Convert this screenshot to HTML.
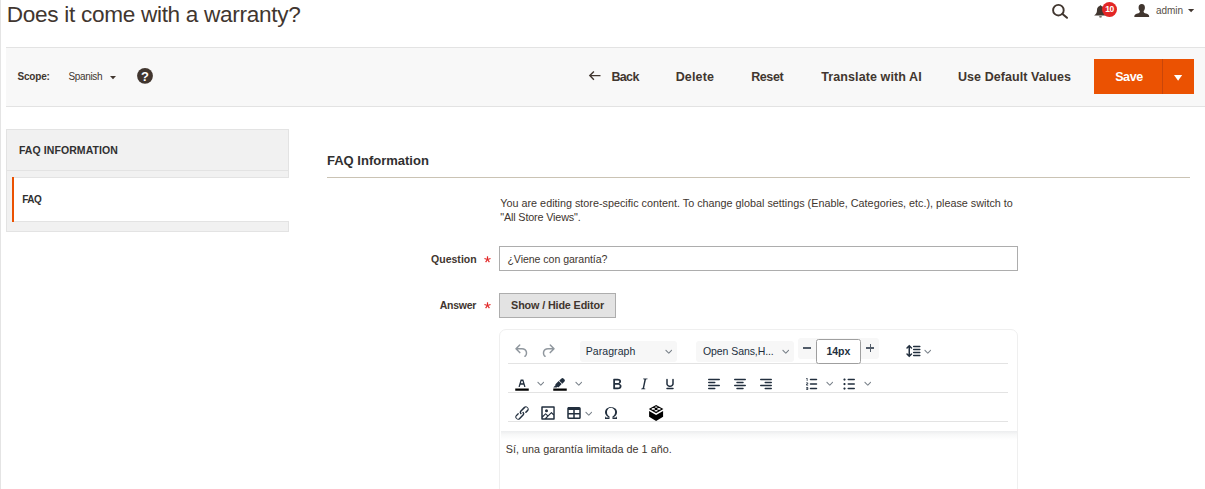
<!DOCTYPE html>
<html>
<head>
<meta charset="utf-8">
<title>Does it come with a warranty?</title>
<style>
*{box-sizing:border-box;margin:0;padding:0}
html,body{width:1205px;height:489px;overflow:hidden;background:#fff}
body{font-family:"Liberation Sans",sans-serif;color:#41362f;position:relative;font-size:11px}
.abs{position:absolute}
.t{position:absolute;white-space:nowrap}
svg{position:absolute;overflow:visible}
.ic{width:18px;height:18px;fill:#222f3e}
.ch{width:7.5px;height:7.5px;fill:rgba(34,47,62,.62);transform:scale(.88)}
.dis{fill:rgba(34,47,62,.5)}
.leftline{left:0;top:0;width:1px;height:489px;background:#e4e4e4}
.actions{left:6px;top:47px;width:1199px;height:60px;background:#f8f8f8;border-top:1px solid #e3e3e3;border-bottom:1px solid #e3e3e3}
.save{left:1094px;top:59px;width:100px;height:35px;background:#eb5202}
.savediv{left:1162px;top:59px;width:1px;height:35px;background:#c9460a}
.panel{left:6px;top:129px;width:283px;height:103px;background:#f1f1f1;border:1px solid #e3e3e3}
.panelhead{left:7px;top:170px;width:281px;height:1px;background:#e3e3e3}
.item{left:12px;top:177px;width:277px;height:45px;background:#fff;border-top:1px solid #e3e3e3;border-bottom:1px solid #e3e3e3}
.secline{left:327px;top:177px;width:863px;height:1px;background:#cac3b4}
.star{color:#e22626;font-weight:700}
.input{left:499px;top:246px;width:519px;height:25px;border:1px solid #adadad;background:#fff}
.showbtn{left:499px;top:293px;width:117px;height:25px;border:1px solid #adadad;background:#e3e3e3}
.editor{left:499px;top:329px;width:519px;height:200px;border:1px solid #efefef;border-radius:7px;background:#fff}
.tbshadow{left:501px;top:431px;width:516px;height:9px;background:linear-gradient(rgba(34,47,62,.085),rgba(34,47,62,.035) 40%,rgba(34,47,62,0) 100%)}
.tbline{left:508px;width:500px;height:1px;background:#e3e3e3}
.sel{background:#f7f7f7;border-radius:3px}
</style>
</head>
<body>
<div class="abs leftline"></div>

<!-- header right icons -->
<svg style="left:1051px;top:3px" width="18" height="16" viewBox="0 0 18 16"><circle cx="7.4" cy="7.2" r="5.3" fill="none" stroke="#41362f" stroke-width="1.9"/><path d="M11.5 10.9 L16 14.8" stroke="#41362f" stroke-width="2" stroke-linecap="round"/></svg>
<svg style="left:1094px;top:5.4px" width="13" height="12.6" viewBox="0 0 13 12.6"><path d="M6.5 0.2 C6 0.2 5.7 0.5 5.7 1 C4 1.5 3 3 3 5 C3 8 2 9 0.1 10.4 L12.9 10.4 C11 9 10 8 10 5 C10 3 9 1.5 7.3 1 C7.3 0.5 7 0.2 6.5 0.2 Z" fill="#41362f"/><ellipse cx="6.5" cy="11.8" rx="1.6" ry="0.65" fill="#41362f"/></svg>
<div class="abs" style="left:1102.3px;top:1.6px;width:15.1px;height:15.1px;border-radius:8px;background:#e22626"></div>
<div class="t" style="left:1105.2px;top:5.3px;font-size:8.5px;line-height:8.5px;font-weight:700;color:#fff;letter-spacing:-0.3px">10</div>
<svg style="left:1134px;top:4px" width="15.5" height="13" viewBox="0 0 15.5 13"><path d="M7.75 0 C5.6 0 4.6 1.6 4.6 3.4 C4.6 5 5.1 6.2 5.9 7 C5.9 8.6 5.2 9 3.4 9.6 C1.2 10.3 0.3 10.8 0.3 13 L15.2 13 C15.2 10.8 14.3 10.3 12.1 9.6 C10.3 9 9.6 8.6 9.6 7 C10.4 6.2 10.9 5 10.9 3.4 C10.9 1.6 9.9 0 7.75 0 Z" fill="#41362f"/></svg>
<svg style="left:1188px;top:9.2px" width="6.2" height="3.2" viewBox="0 0 6.2 3.2"><path d="M0 0 L6.2 0 L3.1 3.2 Z" fill="#41362f"/></svg>

<!-- action bar -->
<div class="abs actions"></div>
<svg style="left:110.4px;top:75.7px" width="6" height="3.2" viewBox="0 0 6 3.2"><path d="M0 0 L6 0 L3 3.2 Z" fill="#41362f"/></svg>
<svg style="left:137px;top:68px" width="16" height="16" viewBox="0 0 16 16"><circle cx="8" cy="7.8" r="7.9" fill="#41362f"/><text x="8" y="12.6" font-family="Liberation Sans" font-weight="700" font-size="13" fill="#fff" text-anchor="middle">?</text></svg>
<svg style="left:589.2px;top:71px" width="11.5" height="9.2" viewBox="0 0 11.5 9.2"><path d="M4.9 0.4 L0.8 4.6 L4.9 8.8 M0.8 4.6 L11.5 4.6" fill="none" stroke="#41362f" stroke-width="1.4"/></svg>
<div class="abs save"></div>
<div class="abs savediv"></div>
<svg style="left:1174.2px;top:75.2px" width="8.2" height="5.8" viewBox="0 0 8.2 5.8"><path d="M0 0 L8.2 0 L4.1 5.8 Z" fill="#fff"/></svg>

<!-- left panel -->
<div class="abs panel"></div>
<div class="abs panelhead"></div>
<div class="abs item"></div>
<div class="abs" style="left:12px;top:177px;width:2px;height:45px;background:#eb5202"></div>

<!-- section -->
<div class="abs secline"></div>
<svg style="left:484.25px;top:255.6px" width="7" height="7" viewBox="-3.5 -3.5 7 7"><g stroke="#e22626" stroke-width="1.2" fill="none"><path d="M0 0 L0 -3.2"/><path d="M0 0 L3.04 -0.99"/><path d="M0 0 L1.88 2.59"/><path d="M0 0 L-1.88 2.59"/><path d="M0 0 L-3.04 -0.99"/></g></svg>
<svg style="left:484.25px;top:301.8px" width="7" height="7" viewBox="-3.5 -3.5 7 7"><g stroke="#e22626" stroke-width="1.2" fill="none"><path d="M0 0 L0 -3.2"/><path d="M0 0 L3.04 -0.99"/><path d="M0 0 L1.88 2.59"/><path d="M0 0 L-1.88 2.59"/><path d="M0 0 L-3.04 -0.99"/></g></svg>
<div class="abs input"></div>
<div class="abs showbtn"></div>

<!-- editor -->
<div class="abs editor"></div>
<div class="abs tbshadow"></div>
<div class="abs tbline" style="top:363px"></div>
<div class="abs tbline" style="top:392px"></div>
<div class="abs tbline" style="top:421px"></div>

<!-- row 1 -->
<svg class="ic dis" style="left:513px;top:341.7px" viewBox="0 0 24 24"><path d="M6.4 8H12c3.7 0 6.2 2 6.8 5.1.6 2.7-.4 5.6-2.3 6.8a1 1 0 0 1-1-1.8c1.1-.6 1.8-2.7 1.4-4.6-.5-2.1-2.1-3.5-4.9-3.5H6.4l3.3 3.3a1 1 0 1 1-1.4 1.4l-5-5a1 1 0 0 1 0-1.4l5-5a1 1 0 0 1 1.4 1.4L6.4 8Z"/></svg>
<svg class="ic dis" style="left:539px;top:341.7px" viewBox="0 0 24 24"><path d="M17.6 8H12c-3.7 0-6.2 2-6.8 5.1-.6 2.7.4 5.6 2.3 6.8a1 1 0 0 0 1-1.8c-1.1-.6-1.8-2.7-1.4-4.6.5-2.1 2.1-3.5 4.9-3.5h5.6l-3.3 3.3a1 1 0 1 0 1.4 1.4l5-5a1 1 0 0 0 0-1.4l-5-5a1 1 0 0 0-1.4 1.4L17.6 8Z"/></svg>
<div class="abs sel" style="left:580px;top:341px;width:97px;height:20.5px"></div>
<svg class="ch" style="left:665.4px;top:347.8px" viewBox="0 0 10 10"><path d="M8.7 2.2c.3-.3.8-.3 1 0 .4.4.4.9 0 1.2L5.7 7.8c-.3.3-.9.3-1.2 0L.2 3.4a.8.8 0 0 1 0-1.2c.3-.3.8-.3 1.1 0L5 6l3.7-3.8Z"/></svg>
<div class="abs sel" style="left:696px;top:341px;width:98px;height:20.5px"></div>
<svg class="ch" style="left:781.7px;top:347.8px" viewBox="0 0 10 10"><path d="M8.7 2.2c.3-.3.8-.3 1 0 .4.4.4.9 0 1.2L5.7 7.8c-.3.3-.9.3-1.2 0L.2 3.4a.8.8 0 0 1 0-1.2c.3-.3.8-.3 1.1 0L5 6l3.7-3.8Z"/></svg>
<div class="abs sel" style="left:798px;top:338px;width:81px;height:21px"></div>
<div class="abs" style="left:803.4px;top:347.2px;width:8.1px;height:1.5px;background:#525c69"></div>
<div class="abs" style="left:866.3px;top:347.35px;width:8px;height:1.5px;background:#525c69"></div>
<div class="abs" style="left:869.55px;top:344.1px;width:1.5px;height:8px;background:#525c69"></div>
<div class="abs" style="left:816px;top:339px;width:45px;height:25px;border:1px solid #9f9f9f;border-radius:2.5px;background:#fff"></div>
<svg class="ic" style="left:904.2px;top:342px" viewBox="0 0 24 24"><path d="M21 5a1 1 0 0 1 .1 2H13a1 1 0 0 1-.1-2H21zm0 4a1 1 0 0 1 .1 2H13a1 1 0 0 1-.1-2H21zm0 4a1 1 0 0 1 .1 2H13a1 1 0 0 1-.1-2H21zm0 4a1 1 0 0 1 .1 2H13a1 1 0 0 1-.1-2H21zM7 3.6l3.7 3.7a1 1 0 0 1-1.3 1.5h-.1L8 7.3v9.2l1.3-1.3a1 1 0 0 1 1.3 0h.1c.4.4.4 1 0 1.3v.1L7 20.4l-3.7-3.7a1 1 0 0 1 1.3-1.5h.1L6 16.7V7.4L4.7 8.7a1 1 0 0 1-1.3 0h-.1a1 1 0 0 1 0-1.3v-.1L7 3.6z"/></svg>
<svg class="ch" style="left:924.3px;top:348.2px" viewBox="0 0 10 10"><path d="M8.7 2.2c.3-.3.8-.3 1 0 .4.4.4.9 0 1.2L5.7 7.8c-.3.3-.9.3-1.2 0L.2 3.4a.8.8 0 0 1 0-1.2c.3-.3.8-.3 1.1 0L5 6l3.7-3.8Z"/></svg>

<!-- row 2 -->
<svg class="ic" style="left:513.1px;top:375px" viewBox="0 0 24 24"><path d="M3 18h18v3H3z" fill="#000"/><path d="M8.7 16h-.8a.5.5 0 0 1-.5-.6l2.7-9c.1-.3.3-.4.5-.4h2.8c.2 0 .4.1.5.4l2.7 9a.5.5 0 0 1-.5.6h-.8a.5.5 0 0 1-.4-.4l-.7-2.2c0-.3-.3-.4-.5-.4h-3.4c-.2 0-.4.1-.5.4l-.7 2.2c0 .3-.2.4-.4.4Zm2.6-7.6-.6 2a.5.5 0 0 0 .5.6h1.6a.5.5 0 0 0 .5-.6l-.6-2c0-.3-.3-.4-.5-.4h-.4c-.2 0-.4.1-.5.4Z" fill-rule="evenodd"/></svg>
<svg class="ch" style="left:536.9px;top:379.7px" viewBox="0 0 10 10"><path d="M8.7 2.2c.3-.3.8-.3 1 0 .4.4.4.9 0 1.2L5.7 7.8c-.3.3-.9.3-1.2 0L.2 3.4a.8.8 0 0 1 0-1.2c.3-.3.8-.3 1.1 0L5 6l3.7-3.8Z"/></svg>
<svg class="ic" style="left:551.3px;top:375px" viewBox="0 0 24 24"><path d="M3 18h18v3H3z" fill="#000"/><path d="M7.7 16.7H3l3.3-3.3-.7-.8L10.2 8l4 4.1-4 4.2c-.2.2-.6.2-.8 0l-.6-.7-1.1 1.1zm5-7.5L11 7.4l3-2.9a2 2 0 0 1 2.6 0L18 6c.7.7.7 2 0 2.7l-2.9 2.9-1.8-1.8-.5-.6"/></svg>
<svg class="ch" style="left:575.3px;top:379.7px" viewBox="0 0 10 10"><path d="M8.7 2.2c.3-.3.8-.3 1 0 .4.4.4.9 0 1.2L5.7 7.8c-.3.3-.9.3-1.2 0L.2 3.4a.8.8 0 0 1 0-1.2c.3-.3.8-.3 1.1 0L5 6l3.7-3.8Z"/></svg>
<svg class="ic" style="left:608px;top:375px" viewBox="0 0 24 24"><path d="M7.8 19c-.3 0-.5 0-.6-.2l-.2-.5V5.7c0-.2 0-.4.2-.5l.6-.2h5c1.5 0 2.7.3 3.5 1 .7.6 1.1 1.4 1.1 2.5a3 3 0 0 1-.6 1.9c-.4.6-1 1-1.6 1.2.4.1.9.3 1.3.6s.8.7 1 1.2c.4.4.5 1 .5 1.6 0 1.3-.4 2.3-1.3 3-.8.7-2.1 1-3.8 1H7.8Zm5-8.3c.6 0 1.2-.1 1.6-.5.4-.3.6-.7.6-1.3 0-1.1-.8-1.7-2.3-1.7H9.3v3.5h3.4Zm.5 6c.7 0 1.3-.1 1.7-.4.4-.4.6-.9.6-1.5s-.2-1-.7-1.4c-.4-.3-1-.4-2-.4H9.4v3.8h4Z" fill-rule="evenodd"/></svg>
<svg class="ic" style="left:634.5px;top:375px" viewBox="0 0 24 24"><path d="m16.7 4.7-.1.9h-.3c-.6 0-1 0-1.4.3-.3.3-.4.6-.5 1.1l-2.1 9.8v.6c0 .5.4.8 1.4.8h.2l-.2.8H8l.2-.8h.2c1.1 0 1.8-.5 2-1.5l2-9.8.1-.5c0-.6-.4-.8-1.4-.8h-.3l.2-.9h5.8Z" fill-rule="evenodd"/></svg>
<svg class="ic" style="left:660.5px;top:375px" viewBox="0 0 24 24"><path d="M16 5c.6 0 1 .4 1 1v5.5a4 4 0 0 1-.4 1.8l-1 1.4a5.3 5.3 0 0 1-5.5 1 5 5 0 0 1-1.6-1c-.5-.4-.8-.9-1.1-1.4a4 4 0 0 1-.4-1.8V6c0-.6.4-1 1-1s1 .4 1 1v5.5c0 .3 0 .6.2 1l.6.7a3.3 3.3 0 0 0 2.2.8 3.4 3.4 0 0 0 2.2-.8c.3-.2.4-.5.6-.8l.2-.9V6c0-.6.4-1 1-1ZM8 17h8c.6 0 1 .4 1 1s-.4 1-1 1H8a1 1 0 0 1 0-2Z" fill-rule="evenodd"/></svg>
<svg class="ic" style="left:705px;top:375px" viewBox="0 0 24 24"><path d="M5 5h14c.6 0 1 .4 1 1s-.4 1-1 1H5a1 1 0 1 1 0-2Zm0 4h8c.6 0 1 .4 1 1s-.4 1-1 1H5a1 1 0 1 1 0-2Zm0 8h8c.6 0 1 .4 1 1s-.4 1-1 1H5a1 1 0 0 1 0-2Zm0-4h14c.6 0 1 .4 1 1s-.4 1-1 1H5a1 1 0 0 1 0-2Z" fill-rule="evenodd"/></svg>
<svg class="ic" style="left:731.2px;top:375px" viewBox="0 0 24 24"><path d="M5 5h14c.6 0 1 .4 1 1s-.4 1-1 1H5a1 1 0 1 1 0-2Zm3 4h8c.6 0 1 .4 1 1s-.4 1-1 1H8a1 1 0 1 1 0-2Zm0 8h8c.6 0 1 .4 1 1s-.4 1-1 1H8a1 1 0 0 1 0-2Zm-3-4h14c.6 0 1 .4 1 1s-.4 1-1 1H5a1 1 0 0 1 0-2Z" fill-rule="evenodd"/></svg>
<svg class="ic" style="left:757px;top:375px" viewBox="0 0 24 24"><path d="M5 5h14c.6 0 1 .4 1 1s-.4 1-1 1H5a1 1 0 1 1 0-2Zm6 4h8c.6 0 1 .4 1 1s-.4 1-1 1h-8a1 1 0 0 1 0-2Zm0 8h8c.6 0 1 .4 1 1s-.4 1-1 1h-8a1 1 0 0 1 0-2Zm-6-4h14c.6 0 1 .4 1 1s-.4 1-1 1H5a1 1 0 0 1 0-2Z" fill-rule="evenodd"/></svg>
<svg class="ic" style="left:802.6px;top:375px" viewBox="0 0 24 24"><path d="M10 17h8c.6 0 1 .4 1 1s-.4 1-1 1h-8a1 1 0 0 1 0-2Zm0-6h8c.6 0 1 .4 1 1s-.4 1-1 1h-8a1 1 0 0 1 0-2Zm0-6h8c.6 0 1 .4 1 1s-.4 1-1 1h-8a1 1 0 1 1 0-2ZM6 4v3.5c0 .3-.2.5-.5.5a.5.5 0 0 1-.5-.5V5h-.5a.5.5 0 0 1 0-1H6Zm-1 8.8.2.2h1.3c.3 0 .5.2.5.5s-.2.5-.5.5H4.9a1 1 0 0 1-.9-1V13c0-.4.3-.8.6-1l1.2-.4.2-.3a.2.2 0 0 0-.2-.2H4.5a.5.5 0 0 1-.5-.5c0-.3.2-.5.5-.5h1.6c.5 0 .9.4.9 1v.1c0 .4-.3.8-.6 1l-1.2.4-.2.3ZM7 17v2c0 .6-.4 1-1 1H4.5a.5.5 0 0 1 0-1h1.2c.2 0 .3-.1.3-.3 0-.2-.1-.3-.3-.3H4.4a.4.4 0 1 1 0-.8h1.3c.2 0 .3-.1.3-.3 0-.2-.1-.3-.3-.3H4.5a.5.5 0 1 1 0-1H6c.6 0 1 .4 1 1Z" fill-rule="evenodd"/></svg>
<svg class="ch" style="left:825.85px;top:379.7px" viewBox="0 0 10 10"><path d="M8.7 2.2c.3-.3.8-.3 1 0 .4.4.4.9 0 1.2L5.7 7.8c-.3.3-.9.3-1.2 0L.2 3.4a.8.8 0 0 1 0-1.2c.3-.3.8-.3 1.1 0L5 6l3.7-3.8Z"/></svg>
<svg class="ic" style="left:839.85px;top:375px" viewBox="0 0 24 24"><path d="M11 5h8c.6 0 1 .4 1 1s-.4 1-1 1h-8a1 1 0 0 1 0-2Zm0 6h8c.6 0 1 .4 1 1s-.4 1-1 1h-8a1 1 0 0 1 0-2Zm0 6h8c.6 0 1 .4 1 1s-.4 1-1 1h-8a1 1 0 0 1 0-2ZM4.5 6c0-.8.7-1.5 1.5-1.5s1.5.7 1.5 1.5S6.8 7.5 6 7.5 4.5 6.8 4.5 6Zm0 6c0-.8.7-1.5 1.5-1.5s1.5.7 1.5 1.5-.7 1.5-1.5 1.5-1.5-.7-1.5-1.5Zm0 6c0-.8.7-1.5 1.5-1.5s1.5.7 1.5 1.5-.7 1.5-1.5 1.5-1.5-.7-1.5-1.5Z" fill-rule="evenodd"/></svg>
<svg class="ch" style="left:863.8px;top:379.7px" viewBox="0 0 10 10"><path d="M8.7 2.2c.3-.3.8-.3 1 0 .4.4.4.9 0 1.2L5.7 7.8c-.3.3-.9.3-1.2 0L.2 3.4a.8.8 0 0 1 0-1.2c.3-.3.8-.3 1.1 0L5 6l3.7-3.8Z"/></svg>

<!-- row 3 -->
<svg class="ic" style="left:513px;top:404px" viewBox="0 0 24 24"><path d="M6.2 12.3a1 1 0 0 1 1.4 1.4l-2 2a2 2 0 1 0 2.6 2.8l4.8-4.8a1 1 0 0 0 0-1.4 1 1 0 1 1 1.4-1.3 2.9 2.9 0 0 1 0 4L9.6 20a3.9 3.9 0 0 1-5.5-5.5l2-2Zm11.6-.6a1 1 0 0 1-1.4-1.4l2-2a2 2 0 1 0-2.6-2.8L11 10.3a1 1 0 0 0 0 1.4A1 1 0 1 1 9.6 13a2.9 2.9 0 0 1 0-4L14.4 4a3.9 3.9 0 0 1 5.5 5.5l-2 2Z"/></svg>
<svg class="ic" style="left:539.1px;top:404px" viewBox="0 0 24 24"><path d="m5 15.7 3.3-3.2c.3-.3.7-.3 1 0L12 15l4.1-4c.3-.4.8-.4 1 0l2 1.9V5H5v10.7ZM5 18V19h3l2.8-2.9-2-2L5 17.9Zm14-3-2.5-2.4-6.4 6.5H19v-4ZM4 3h16c.6 0 1 .4 1 1v16c0 .6-.4 1-1 1H4a1 1 0 0 1-1-1V4c0-.6.4-1 1-1Zm6 8a2 2 0 1 0 0-4 2 2 0 0 0 0 4Z"/></svg>
<svg class="ic" style="left:565.25px;top:404px" viewBox="0 0 24 24"><path d="M19 4a2 2 0 0 1 2 2v12a2 2 0 0 1-2 2H5a2 2 0 0 1-2-2V6c0-1.1.9-2 2-2h14ZM5 14v4h6v-4H5Zm14 0h-6v4h6v-4Zm0-6h-6v4h6V8ZM5 12h6V8H5v4Z"/></svg>
<svg class="ch" style="left:584.85px;top:409.65px" viewBox="0 0 10 10"><path d="M8.7 2.2c.3-.3.8-.3 1 0 .4.4.4.9 0 1.2L5.7 7.8c-.3.3-.9.3-1.2 0L.2 3.4a.8.8 0 0 1 0-1.2c.3-.3.8-.3 1.1 0L5 6l3.7-3.8Z"/></svg>
<svg class="ic" style="left:602.15px;top:404px" viewBox="0 0 24 24"><path d="M15 18h4l1-2v4h-6v-3.3l1.4-1a6 6 0 0 0 1.8-2.9 6.3 6.3 0 0 0-.1-4.1 5.8 5.8 0 0 0-3-3.2c-.6-.3-1.3-.5-2.1-.5a5.1 5.1 0 0 0-3.9 1.8 6.3 6.3 0 0 0-1.3 6 6.2 6.2 0 0 0 1.8 3l1.4.9V20H4v-4l1 2h4v-.5l-2-1L5.4 15A6.5 6.5 0 0 1 4 11c0-1 .2-1.9.6-2.7A7 7 0 0 1 6.3 6C7.1 5.4 8 5 9 4.5c1-.3 2-.5 3.1-.5a8.8 8.8 0 0 1 5.7 2 7 7 0 0 1 1.7 2.3 6 6 0 0 1 .2 4.8c-.2.7-.6 1.3-1 1.9a7.6 7.6 0 0 1-3.6 2.5v.5Z" fill-rule="evenodd"/></svg>
<svg style="left:648px;top:404.6px" width="16" height="16.2" viewBox="0 0 16 16.2"><path d="M1.1 6.1 L8.1 10 L15.1 6.1 L15.1 11.8 L8.1 16 L1.1 11.8 Z" fill="#000"/><path d="M8.1 0 L15.4 4.1 L8.1 8.2 L0.8 4.1 Z" fill="#000"/><g fill="#fff"><ellipse cx="5.3" cy="3.9" rx="1.8" ry="0.85"/><ellipse cx="10.9" cy="3.9" rx="1.8" ry="0.85"/><ellipse cx="8.1" cy="5.7" rx="1.7" ry="0.8"/><ellipse cx="8.1" cy="2.1" rx="1.5" ry="0.65"/></g></svg>

<div id="h1" class="t" style="left:6.80px;top:4.00px;font-size:22.6px;line-height:22.6px;font-weight:400;color:#41362f;letter-spacing:-0.307px">Does it come with a warranty?</div>
<div id="scope" class="t" style="left:17.40px;top:72.00px;font-size:10px;line-height:10px;font-weight:700;color:#41362f;letter-spacing:-0.160px">Scope:</div>
<div id="spanish" class="t" style="left:68.50px;top:72.00px;font-size:10px;line-height:10px;font-weight:400;color:#41362f;letter-spacing:-0.365px">Spanish</div>
<div id="back" class="t" style="left:611.40px;top:71.00px;font-size:12.5px;line-height:12.5px;font-weight:700;color:#41362f;letter-spacing:-0.634px">Back</div>
<div id="delete" class="t" style="left:675.70px;top:71.00px;font-size:12.5px;line-height:12.5px;font-weight:700;color:#41362f;letter-spacing:0.160px">Delete</div>
<div id="reset" class="t" style="left:751.20px;top:71.00px;font-size:12.5px;line-height:12.5px;font-weight:700;color:#41362f;letter-spacing:-0.400px">Reset</div>
<div id="translate" class="t" style="left:821.20px;top:71.00px;font-size:12.5px;line-height:12.5px;font-weight:700;color:#41362f;letter-spacing:0.103px">Translate with AI</div>
<div id="usedef" class="t" style="left:958.00px;top:71.00px;font-size:12.5px;line-height:12.5px;font-weight:700;color:#41362f;letter-spacing:0.070px">Use Default Values</div>
<div id="save" class="t" style="left:1115.20px;top:71.00px;font-size:12.5px;line-height:12.5px;font-weight:700;color:#ffffff;letter-spacing:-0.400px">Save</div>
<div id="admin" class="t" style="left:1155.90px;top:6.00px;font-size:10px;line-height:10px;font-weight:400;color:#574e48;letter-spacing:0.000px">admin</div>
<div id="faqinfo" class="t" style="left:18.90px;top:145.00px;font-size:10.5px;line-height:10.5px;font-weight:700;color:#303030;letter-spacing:0.086px">FAQ INFORMATION</div>
<div id="faq" class="t" style="left:22.20px;top:195.00px;font-size:10px;line-height:10px;font-weight:700;color:#303030;letter-spacing:-0.500px">FAQ</div>
<div id="sectitle" class="t" style="left:327.00px;top:154.00px;font-size:13px;line-height:13px;font-weight:700;color:#303030;letter-spacing:-0.000px">FAQ Information</div>
<div id="note1" class="t" style="left:500.30px;top:198.00px;font-size:10.8px;line-height:10.8px;font-weight:400;color:#41362f;letter-spacing:0.000px">You are editing store-specific content. To change global settings (Enable, Categories, etc.), please switch to</div>
<div id="note2" class="t" style="left:500.30px;top:212.00px;font-size:10.8px;line-height:10.8px;font-weight:400;color:#41362f;letter-spacing:-0.155px">"All Store Views".</div>
<div id="question" class="t" style="left:431.00px;top:254.00px;font-size:10.5px;line-height:10.5px;font-weight:700;color:#41362f;letter-spacing:0.027px">Question</div>
<div id="answer" class="t" style="left:439.70px;top:300.00px;font-size:10.5px;line-height:10.5px;font-weight:700;color:#41362f;letter-spacing:-0.240px">Answer</div>
<div id="qinput" class="t" style="left:507.40px;top:254.00px;font-size:10.6px;line-height:10.6px;font-weight:400;color:#41362f;letter-spacing:-0.053px">¿Viene con garantía?</div>
<div id="showhide" class="t" style="left:511.10px;top:300.00px;font-size:10.8px;line-height:10.8px;font-weight:700;color:#41362f;letter-spacing:-0.140px">Show / Hide Editor</div>
<div id="paragraph" class="t" style="left:585.80px;top:346.00px;font-size:10.5px;line-height:10.5px;font-weight:400;color:#222f3e;letter-spacing:0.060px">Paragraph</div>
<div id="opensans" class="t" style="left:703.00px;top:346.00px;font-size:10.5px;line-height:10.5px;font-weight:400;color:#222f3e;letter-spacing:-0.077px">Open Sans,H...</div>
<div id="px14" class="t" style="left:826.40px;top:346.00px;font-size:10.5px;line-height:10.5px;font-weight:700;color:#222f3e;letter-spacing:0.000px">14px</div>
<div id="content" class="t" style="left:505.70px;top:444.00px;font-size:10.8px;line-height:10.8px;font-weight:400;color:#41362f;letter-spacing:0.029px">Sí, una garantía limitada de 1 año.</div>
</body>
</html>
